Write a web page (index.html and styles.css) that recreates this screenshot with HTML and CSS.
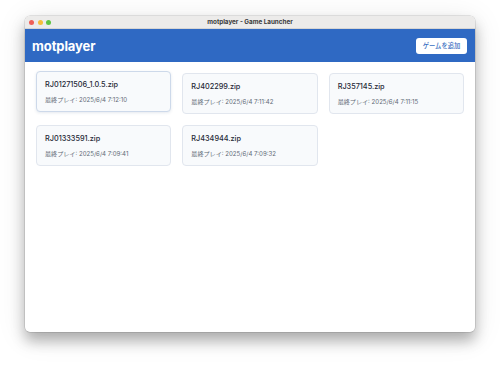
FILE: index.html
```html
<!DOCTYPE html>
<html lang="ja">
<head>
<meta charset="utf-8">
<title>motplayer - Game Launcher</title>
<link rel="stylesheet" href="styles.css">
</head>
<body>
<div class="desktop">
  <div class="window">
    <div class="titlebar">
      <div class="lights">
        <span class="light red"></span>
        <span class="light yellow"></span>
        <span class="light green"></span>
      </div>
      <div class="wintitle">motplayer - Game Launcher</div>
    </div>
    <header class="appbar">
      <h1 class="brand">motplayer</h1>
      <button class="add-btn">ゲームを追加</button>
    </header>
    <main class="content">
      <div class="grid">
        <div class="card hovered">
          <div class="card-title">RJ01271506_1.0.5.zip</div>
          <div class="card-sub">最終プレイ: 2025/6/4 7:12:10</div>
        </div>
        <div class="card">
          <div class="card-title">RJ402299.zip</div>
          <div class="card-sub">最終プレイ: 2025/6/4 7:11:42</div>
        </div>
        <div class="card">
          <div class="card-title">RJ357145.zip</div>
          <div class="card-sub">最終プレイ: 2025/6/4 7:11:15</div>
        </div>
        <div class="card">
          <div class="card-title">RJ01333591.zip</div>
          <div class="card-sub">最終プレイ: 2025/6/4 7:09:41</div>
        </div>
        <div class="card">
          <div class="card-title">RJ434944.zip</div>
          <div class="card-sub">最終プレイ: 2025/6/4 7:09:32</div>
        </div>
      </div>
    </main>
  </div>
</div>
</body>
</html>
```
FILE: styles.css
```css
* { box-sizing: border-box; }
html, body {
  margin: 0;
  padding: 0;
  background: #ffffff;
  font-family: "Inter", "Noto Sans CJK JP", sans-serif;
}
.desktop {
  width: 500px;
  height: 365px;
  padding: 16px 25px 0 25px;
}
.window {
  width: 450px;
  height: 316px;
  background: #ffffff;
  border-radius: 5px;
  overflow: hidden;
  box-shadow: 0 0 0 0.5px rgba(0,0,0,0.18), 0 9px 14px rgba(0,0,0,0.28), 0 4px 30px rgba(0,0,0,0.10);
  display: flex;
  flex-direction: column;
}
.titlebar {
  height: 13px;
  flex: none;
  background: #ecebea;
  border-bottom: 1px solid #d6d5d4;
  position: relative;
  display: flex;
  align-items: center;
  justify-content: center;
}
.lights {
  position: absolute;
  left: 4px;
  top: 4px;
  display: flex;
  gap: 3.5px;
}
.light {
  width: 5px;
  height: 5px;
  border-radius: 50%;
  display: block;
}
.red { background: #ee5f57; }
.yellow { background: #f5bd3a; }
.green { background: #5fc443; }
.wintitle {
  font-size: 6.3px;
  font-weight: 700;
  color: #3a3a3a;
  line-height: 1;
}
.appbar {
  height: 33px;
  flex: none;
  background: #2f69c3;
  display: flex;
  align-items: center;
  justify-content: space-between;
  padding: 0 8px 0 7px;
}
.brand {
  margin: 0;
  font-size: 13px;
  font-weight: 700;
  color: #ffffff;
  letter-spacing: -0.1px;
}
.add-btn {
  width: 51px;
  height: 16px;
  border: none;
  border-radius: 3px;
  background: #ffffff;
  color: #3a6fc2;
  font-family: "Noto Sans CJK JP", sans-serif;
  font-size: 6.3px;
  font-weight: 500;
  padding: 0;
}
.content {
  padding: 11px;
}
.grid {
  display: grid;
  grid-template-columns: repeat(3, 1fr);
  gap: 11px;
}
.card {
  height: 41px;
  border: 1px solid #e1e6ee;
  border-radius: 4px;
  background: #f8fafc;
  padding: 8px 8px 0 8px;
}
.card.hovered {
  transform: translateY(-2px);
  border-color: #cdd9ea;
  box-shadow: 0 1px 3px rgba(40,70,120,0.12);
}
.card-title {
  font-size: 7.3px;
  line-height: 10px;
  font-weight: 500;
  color: #1f2937;
}
.card-sub {
  margin-top: 6px;
  font-size: 6.1px;
  line-height: 8px;
  color: #626a76;
}
```
